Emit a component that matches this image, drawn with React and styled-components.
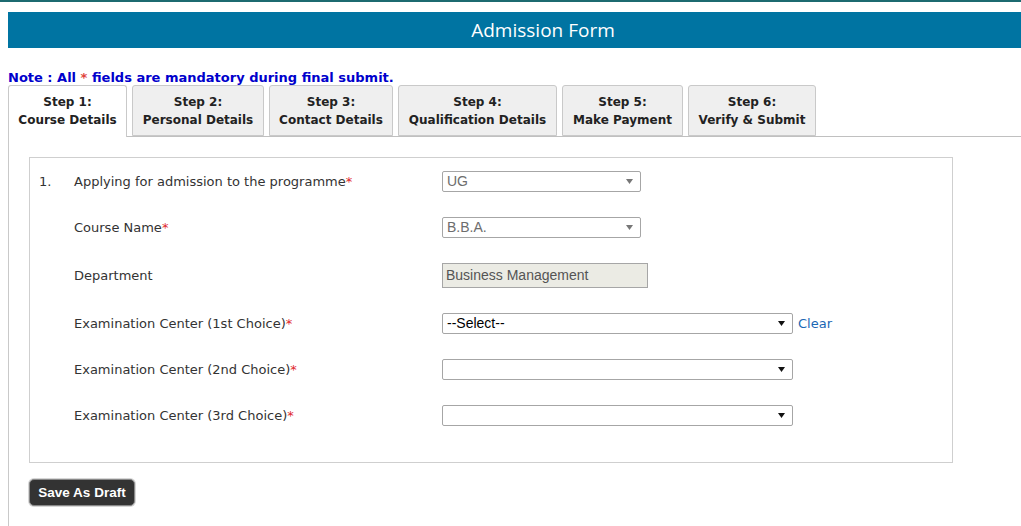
import React from "react"
import styled, { createGlobalStyle } from "styled-components"

const Global = createGlobalStyle`
  html, body {
    margin: 0;
    padding: 0;
    background: #fff;
    overflow: hidden;
  }
  body {
    font-family: "DejaVu Sans", Verdana, sans-serif;
    font-size: 13px;
    color: #333;
  }
`

const tabs = [
  ["Step 1:", "Course Details", 119],
  ["Step 2:", "Personal Details", 132],
  ["Step 3:", "Contact Details", 124],
  ["Step 4:", "Qualification Details", 159],
  ["Step 5:", "Make Payment", 121],
  ["Step 6:", "Verify & Submit", 128],
]

const Arrow = ({ dark }) => (
  <svg width="7" height="5" viewBox="0 0 7 5">
    <path d="M0 0 H7 L3.5 5 Z" fill={dark ? "#111" : "#777"} />
  </svg>
)

const App = () => (
  <>
    <Global />
    <TopRule />
    <Page>
      <TitleBar>Admission Form</TitleBar>
      <Note>
        Note : All <Star>*</Star> fields are mandatory during final submit.
      </Note>
      <Tabs>
        {tabs.map(([a, b, w], i) => (
          <Tab key={a} active={i === 0} style={{ width: w }}>
            {a}
            <br />
            {b}
          </Tab>
        ))}
      </Tabs>
      <Panel>
        <FormBox>
          <Row>
            <Num>1.</Num>
            <Label>
              Applying for admission to the programme<Req>*</Req>
            </Label>
            <Select width={199} disabled>
              <span>UG</span>
              <Arrow />
            </Select>
          </Row>
          <Row>
            <Num />
            <Label>
              Course Name<Req>*</Req>
            </Label>
            <Select width={199} disabled>
              <span>B.B.A.</span>
              <Arrow />
            </Select>
          </Row>
          <Row tall>
            <Num />
            <Label>Department</Label>
            <ReadOnly>Business Management</ReadOnly>
          </Row>
          <Row>
            <Num />
            <Label>
              Examination Center (1st Choice)<Req>*</Req>
            </Label>
            <Select width={351}>
              <span>--Select--</span>
              <Arrow dark />
            </Select>
            <ClearLink>Clear</ClearLink>
          </Row>
          <Row>
            <Num />
            <Label>
              Examination Center (2nd Choice)<Req>*</Req>
            </Label>
            <Select width={351}>
              <span />
              <Arrow dark />
            </Select>
          </Row>
          <Row>
            <Num />
            <Label>
              Examination Center (3rd Choice)<Req>*</Req>
            </Label>
            <Select width={351}>
              <span />
              <Arrow dark />
            </Select>
          </Row>
        </FormBox>
        <DraftButton>Save As Draft</DraftButton>
      </Panel>
    </Page>
  </>
)

export default App

const TopRule = styled.div`
  height: 2px;
  background: #1c6a70;
`

const Page = styled.div`
  padding: 10px 0 0 8px;
`

const TitleBar = styled.div`
  height: 36px;
  padding-left: 57px;
  background: #0074a2;
  color: #fff;
  font-family: "Open Sans", sans-serif;
  font-size: 19px;
  line-height: 37px;
  text-align: center;
`

const Note = styled.div`
  margin-top: 23px;
  height: 14px;
  line-height: 14px;
  font-weight: bold;
  color: #0000cc;
  font-size: 13px;
`

const Star = styled.span`
  color: #e0443c;
`

const Tabs = styled.div`
  display: flex;
  gap: 5px;
  margin-bottom: -1px;
  position: relative;
  z-index: 1;
`

const Tab = styled.div`
  box-sizing: border-box;
  height: ${p => (p.active ? "52px" : "51px")};
  padding-top: 7px;
  border: 1px solid #c9c9c9;
  border-bottom: ${p => (p.active ? "none" : "1px solid #c9c9c9")};
  border-radius: 3px 3px 0 0;
  background: ${p => (p.active ? "#fff" : "#efefef")};
  color: #222;
  font-weight: bold;
  font-size: 12px;
  line-height: 18px;
  text-align: center;
  white-space: nowrap;
`

const Panel = styled.div`
  border-top: 1px solid #c0c0c0;
  border-left: 1px solid #c9c9c9;
  padding: 20px 0 30px 20px;
`

const FormBox = styled.div`
  box-sizing: border-box;
  width: 924px;
  border: 1px solid #cfcfcf;
  padding: 0 0 24px 9px;
`

const Row = styled.div`
  display: flex;
  align-items: center;
  height: ${p => (p.tall ? "50px" : "46px")};
`

const Num = styled.div`
  width: 35px;
  flex: none;
`

const Label = styled.div`
  width: 368px;
  flex: none;
  white-space: nowrap;
  color: #333;
`

const Req = styled.span`
  color: #e0282c;
`

const Select = styled.div`
  box-sizing: border-box;
  width: ${p => p.width}px;
  height: 21px;
  display: flex;
  align-items: center;
  justify-content: space-between;
  padding: 0 7px 0 4px;
  border: 1px solid #a6a6a6;
  border-radius: 2px;
  background: #fff;
  font-family: "Liberation Sans", Arial, sans-serif;
  font-size: 14px;
  color: ${p => (p.disabled ? "#6d6d6d" : "#000")};
`

const ReadOnly = styled.div`
  box-sizing: border-box;
  width: 206px;
  height: 25px;
  padding: 0 3px;
  border: 1px solid #a6a6a6;
  background: #ebebe4;
  font-family: "Liberation Sans", Arial, sans-serif;
  font-size: 14px;
  line-height: 23px;
  color: #545454;
`

const ClearLink = styled.a`
  margin-left: 5px;
  color: #1a67b4;
  cursor: pointer;
`

const DraftButton = styled.button`
  display: block;
  margin-top: 16px;
  box-sizing: border-box;
  width: 106px;
  height: 27px;
  padding: 0;
  border: 1px solid #888;
  border-radius: 5px;
  background: #333;
  color: #fff;
  font-family: "Liberation Sans", Arial, sans-serif;
  font-weight: bold;
  font-size: 13.5px;
  box-shadow: 0 0 0 1px #d6d6d6;
`
